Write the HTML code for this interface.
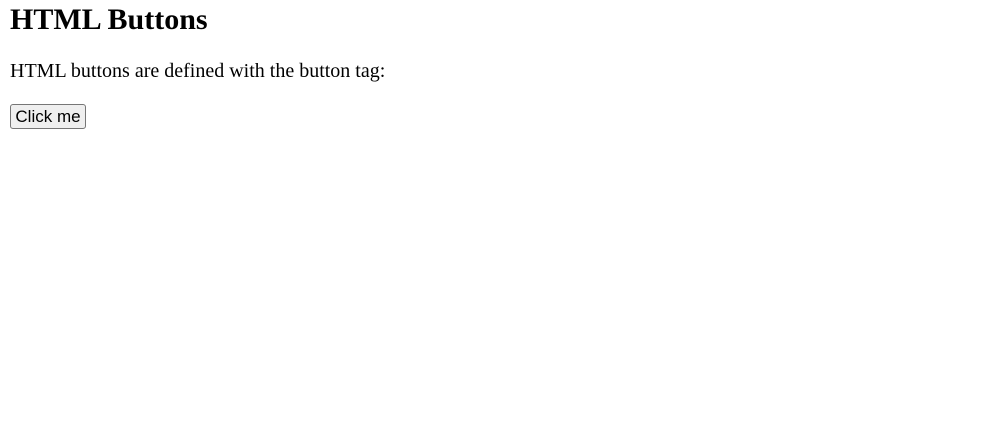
<!DOCTYPE html>
<html><head><style>
body{margin:0;background:#fff;width:983px;height:438px;position:relative;overflow:hidden;font-family:"Liberation Serif",serif;color:#000}
h1{position:absolute;left:10px;top:2px;margin:0;font-size:30px;line-height:35px;font-weight:bold}
p{position:absolute;left:10px;top:60px;margin:0;font-size:20px;line-height:23px;white-space:nowrap}
button{position:absolute;left:10px;top:104px;width:76px;height:25px;padding:0;margin:0;box-sizing:border-box;font-family:"Liberation Sans",sans-serif;font-size:17px;color:#000;background:#efefef;border:1px solid #767676;border-radius:3px;line-height:23px}
</style></head><body>
<h1>HTML Buttons</h1>
<p>HTML buttons are defined with the button tag:</p>
<button>Click me</button>
</body></html>
